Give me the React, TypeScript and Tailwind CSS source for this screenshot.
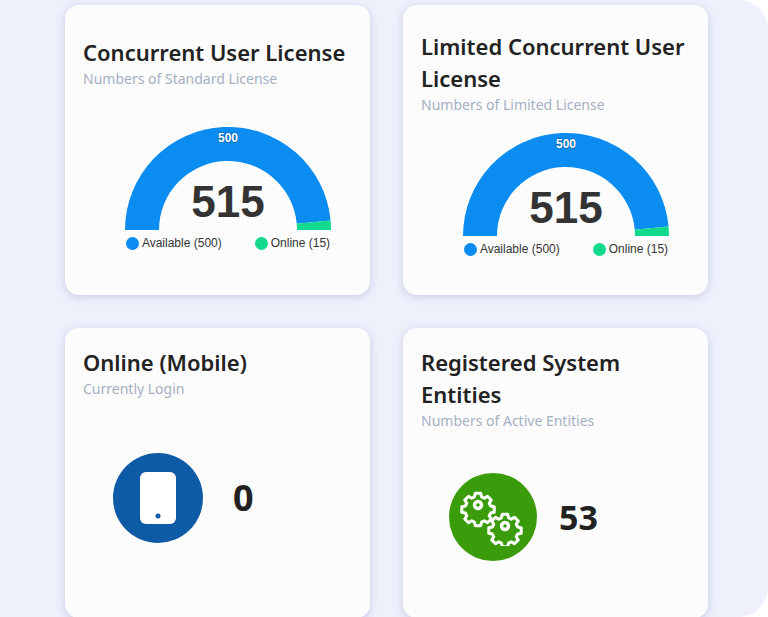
const font = { fontFamily: '"Noto Sans", "Open Sans", sans-serif' };

const Gauge = () => {
  const cx = 110, cy = 105, R = 103, r = 69;
  const total = 515, online = 15;
  const pt = (rad: number, a: number) => [cx + rad * Math.cos(a), cy - rad * Math.sin(a)];
  const arc = (a0: number, a1: number) => {
    const [x0, y0] = pt(R, a0), [x1, y1] = pt(R, a1), [x2, y2] = pt(r, a1), [x3, y3] = pt(r, a0);
    return `M${x0} ${y0} A${R} ${R} 0 0 1 ${x1} ${y1} L${x2} ${y2} A${r} ${r} 0 0 0 ${x3} ${y3} Z`;
  };
  const split = Math.PI * (online / total);
  return (
    <div className="flex flex-col items-center">
      <div className="relative w-[220px] h-[106px]">
        <svg width="220" height="106" viewBox="0 0 220 106">
          <path d={arc(Math.PI, split)} fill="#0a8cf0" />
          <path d={arc(split, 0)} fill="#12d98c" />
          <text x="110" y="17" textAnchor="middle" fontSize="12" fontWeight="700" fill="#fff" fontFamily="Liberation Sans, Arial, sans-serif" style={{ paintOrder: "stroke" }} stroke="rgba(0,0,0,0.25)" strokeWidth="1.5">500</text>
        </svg>
        <div className="absolute left-0 right-0 top-[55px] text-center text-[44px] leading-none font-bold text-[#333]" style={{ fontFamily: '"Liberation Sans", Arial, sans-serif' }}>515</div>
      </div>
      <div className="flex gap-[33px] mt-[3px] text-[12px] text-[#333]" style={{ fontFamily: '"Liberation Sans", Arial, sans-serif' }}>
        <div className="flex items-center gap-[3px]"><span className="w-[13px] h-[13px] rounded-full bg-[#0a8cf0]" />Available (500)</div>
        <div className="flex items-center gap-[3px]"><span className="w-[13px] h-[13px] rounded-full bg-[#12d98c]" />Online (15)</div>
      </div>
    </div>
  );
};

const Card = ({ title, sub, children, pad }: { title: React.ReactNode; sub: string; children: React.ReactNode; pad: string }) => (
  <div className={`w-[305px] h-[290px] bg-[#fcfcfd] rounded-[14px] shadow-[0_2px_8px_rgba(90,100,150,0.25)] px-[18px] ${pad} flex flex-col`} style={font}>
    <div className="text-[22px] leading-[32px] font-semibold text-[#222]">{title}</div>
    <div className="text-[14px] leading-[20px] text-[#a5b0c2] mt-[1px]">{sub}</div>
    {children}
  </div>
);

const gear = "M-3 -13h6l1 4 3 1.5 3.5-2.2 4.2 4.2-2.2 3.5 1.5 3 4 1v6l-4 1-1.5 3 2.2 3.5-4.2 4.2-3.5-2.2-3 1.5-1 4h-6l-1-4-3-1.5-3.5 2.2-4.2-4.2 2.2-3.5-1.5-3-4-1v-6l4-1 1.5-3-2.2-3.5 4.2-4.2 3.5 2.2 3-1.5z";

export default function App() {
  return (
    <div className="w-[768px] h-[617px] bg-white overflow-hidden">
      <div className="w-[768px] h-[617px] bg-[#eef0fc] rounded-r-[30px] pl-[65px] pt-[5px] grid grid-cols-[305px_305px] gap-x-[33px] gap-y-[33px]">
        <Card title="Concurrent User License" sub="Numbers of Standard License" pad="pt-[31px]">
          <div className="ml-[35px] mt-[36px] w-[220px]"><Gauge /></div>
        </Card>
        <Card title={<>Limited Concurrent User<br />License</>} sub="Numbers of Limited License" pad="pt-[25px]">
          <div className="ml-[35px] mt-[16px] w-[220px]"><Gauge /></div>
        </Card>
        <Card title="Online (Mobile)" sub="Currently Login" pad="pt-[18px]">
          <div className="flex items-center mt-[54px] ml-[30px] gap-[30px]">
            <div className="w-[90px] h-[90px] rounded-full bg-[#0d5aa7] flex items-center justify-center">
              <svg width="36" height="52" viewBox="0 0 36 52"><rect x="0" y="0" width="36" height="52" rx="6" fill="#fff" /><circle cx="18" cy="44" r="2.5" fill="#0d5aa7" /></svg>
            </div>
            <div className="text-[36px] font-bold text-[#222]">0</div>
          </div>
        </Card>
        <Card title={<>Registered System<br />Entities</>} sub="Numbers of Active Entities" pad="pt-[18px]">
          <div className="flex items-center mt-[42px] ml-[28px] gap-[22px]">
            <div className="w-[88px] h-[88px] rounded-full bg-[#3a9c0a] flex items-center justify-center">
              <svg width="66" height="58" viewBox="0 0 66 58" fill="none" stroke="#fff" strokeWidth="3.4" strokeLinejoin="round">
                <g transform="translate(18 17)">
                  <path d={gear} transform="scale(0.9)" />
                  <circle r="3.5" />
                </g>
                <g transform="translate(45 38)">
                  <path d={gear} transform="scale(0.9)" />
                  <circle r="3.5" />
                </g>
              </svg>
            </div>
            <div className="text-[34px] font-bold text-[#222]">53</div>
          </div>
        </Card>
      </div>
    </div>
  );
}
